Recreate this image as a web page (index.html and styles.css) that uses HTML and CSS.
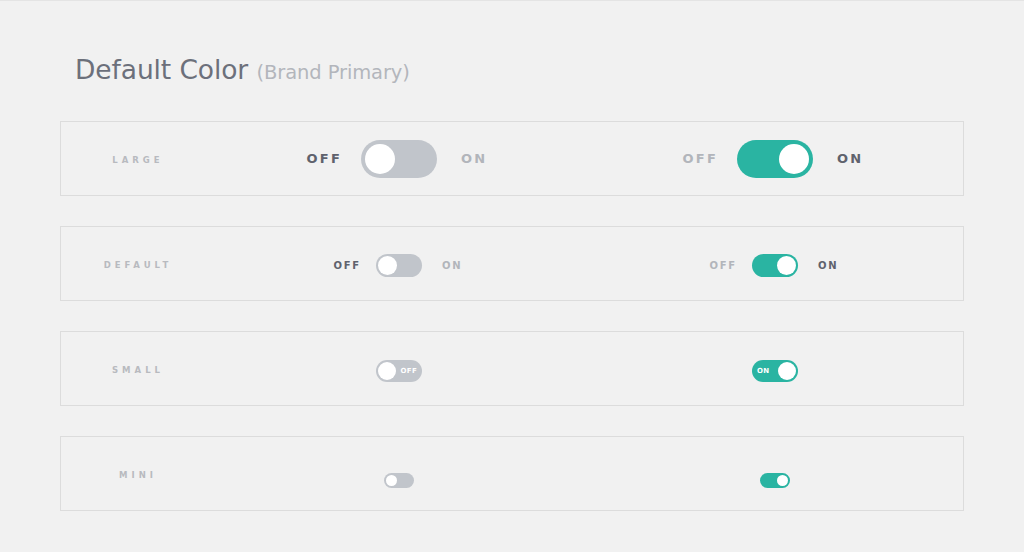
FILE: index.html
```html
<!DOCTYPE html>
<html lang="en">
<head>
<meta charset="utf-8">
<title>Default Color</title>
<link rel="stylesheet" href="styles.css">
</head>
<body>
<div class="page">
  <h1 class="title">Default Color <span class="sub">(Brand Primary)</span></h1>

  <div class="card">
    <div class="label">LARGE</div>
    <div class="cell lg">
      <span class="txt off active">OFF</span>
      <span class="toggle t-lg"><span class="knob"></span></span>
      <span class="txt on">ON</span>
    </div>
    <div class="cell lg">
      <span class="txt off">OFF</span>
      <span class="toggle t-lg is-on"><span class="knob"></span></span>
      <span class="txt on active">ON</span>
    </div>
  </div>

  <div class="card">
    <div class="label">DEFAULT</div>
    <div class="cell md">
      <span class="txt off active">OFF</span>
      <span class="toggle t-md"><span class="knob"></span></span>
      <span class="txt on">ON</span>
    </div>
    <div class="cell md">
      <span class="txt off">OFF</span>
      <span class="toggle t-md is-on"><span class="knob"></span></span>
      <span class="txt on active">ON</span>
    </div>
  </div>

  <div class="card">
    <div class="label">SMALL</div>
    <div class="cell single">
      <span class="toggle t-sm"><span class="knob"></span><span class="inner">OFF</span></span>
    </div>
    <div class="cell single">
      <span class="toggle t-sm is-on"><span class="inner">ON</span><span class="knob"></span></span>
    </div>
  </div>

  <div class="card">
    <div class="label">MINI</div>
    <div class="cell single">
      <span class="toggle t-xs"><span class="knob"></span></span>
    </div>
    <div class="cell single">
      <span class="toggle t-xs is-on"><span class="knob"></span></span>
    </div>
  </div>
</div>
</body>
</html>
```

FILE: styles.css
```css
html, body {
  margin: 0;
  padding: 0;
  background: #f1f1f1;
}

body {
  font-family: "DejaVu Sans", "Noto Sans", sans-serif;
  color: #5f626d;
}

.page {
  border-top: 1px solid #e4e4e4;
  padding: 0 60px;
}

.title {
  margin: 52px 0 0 15px;
  height: 68px;
  font-size: 26.5px;
  line-height: 34px;
  font-weight: 400;
  color: #6c707b;
  letter-spacing: -0.1px;
}

.title .sub {
  font-size: 19.5px;
  color: #b3b6bc;
  letter-spacing: -0.1px;
}

.card {
  display: grid;
  grid-template-columns: 150px 1fr 1fr;
  align-items: center;
  height: 73px;
  border: 1px solid #dcdcdc;
  margin-bottom: 30px;
}

.label {
  text-align: center;
  font-size: 8.5px;
  font-weight: 700;
  letter-spacing: 4px;
  padding-left: 4px;
  color: #b8babf;
  margin-top: 3px;
}

.cell {
  display: grid;
  grid-template-columns: 1fr auto 1fr;
  align-items: center;
}

.cell.single {
  display: flex;
  justify-content: center;
}

.lg .txt.off {
  margin-right: 19px;
}

.lg .txt.on {
  margin-left: 24px;
}

.cell.md {
  margin-top: 4px;
}

.md .txt.off {
  margin-right: 15px;
}

.md .txt.on {
  margin-left: 20px;
}

.txt {
  font-weight: 700;
  color: #b2b5bb;
}

.txt.active {
  color: #5f626d;
}

.lg .txt {
  font-size: 13px;
  letter-spacing: 2.2px;
}

.md .txt {
  font-size: 10px;
  letter-spacing: 1.8px;
}

.txt.off {
  justify-self: end;
}

.txt.on {
  justify-self: start;
}

.toggle {
  display: flex;
  align-items: center;
  box-sizing: border-box;
  background: #c1c5cb;
  border-radius: 999px;
}

.toggle.is-on {
  background: #2ab4a2;
  justify-content: flex-end;
}

.knob {
  display: block;
  background: #ffffff;
  border-radius: 50%;
  flex: none;
}

.t-lg {
  width: 76px;
  height: 38px;
  padding: 0 4px;
}

.t-lg .knob {
  width: 30px;
  height: 30px;
}

.t-md {
  width: 46px;
  height: 23px;
  padding: 0 2px;
}

.t-md .knob {
  width: 19px;
  height: 19px;
}

.t-sm {
  width: 46px;
  height: 22px;
  padding: 0 2px;
  margin-top: 4px;
  justify-content: space-between;
}

.t-sm.is-on {
  justify-content: space-between;
}

.t-sm .knob {
  width: 18px;
  height: 18px;
}

.t-sm .inner {
  font-size: 7px;
  font-weight: 700;
  color: #ffffff;
  letter-spacing: 0.3px;
  padding: 0 3px;
}

.t-xs {
  width: 30px;
  height: 15px;
  padding: 0 2px;
  margin-top: 14px;
}

.t-xs .knob {
  width: 11px;
  height: 11px;
}
```
